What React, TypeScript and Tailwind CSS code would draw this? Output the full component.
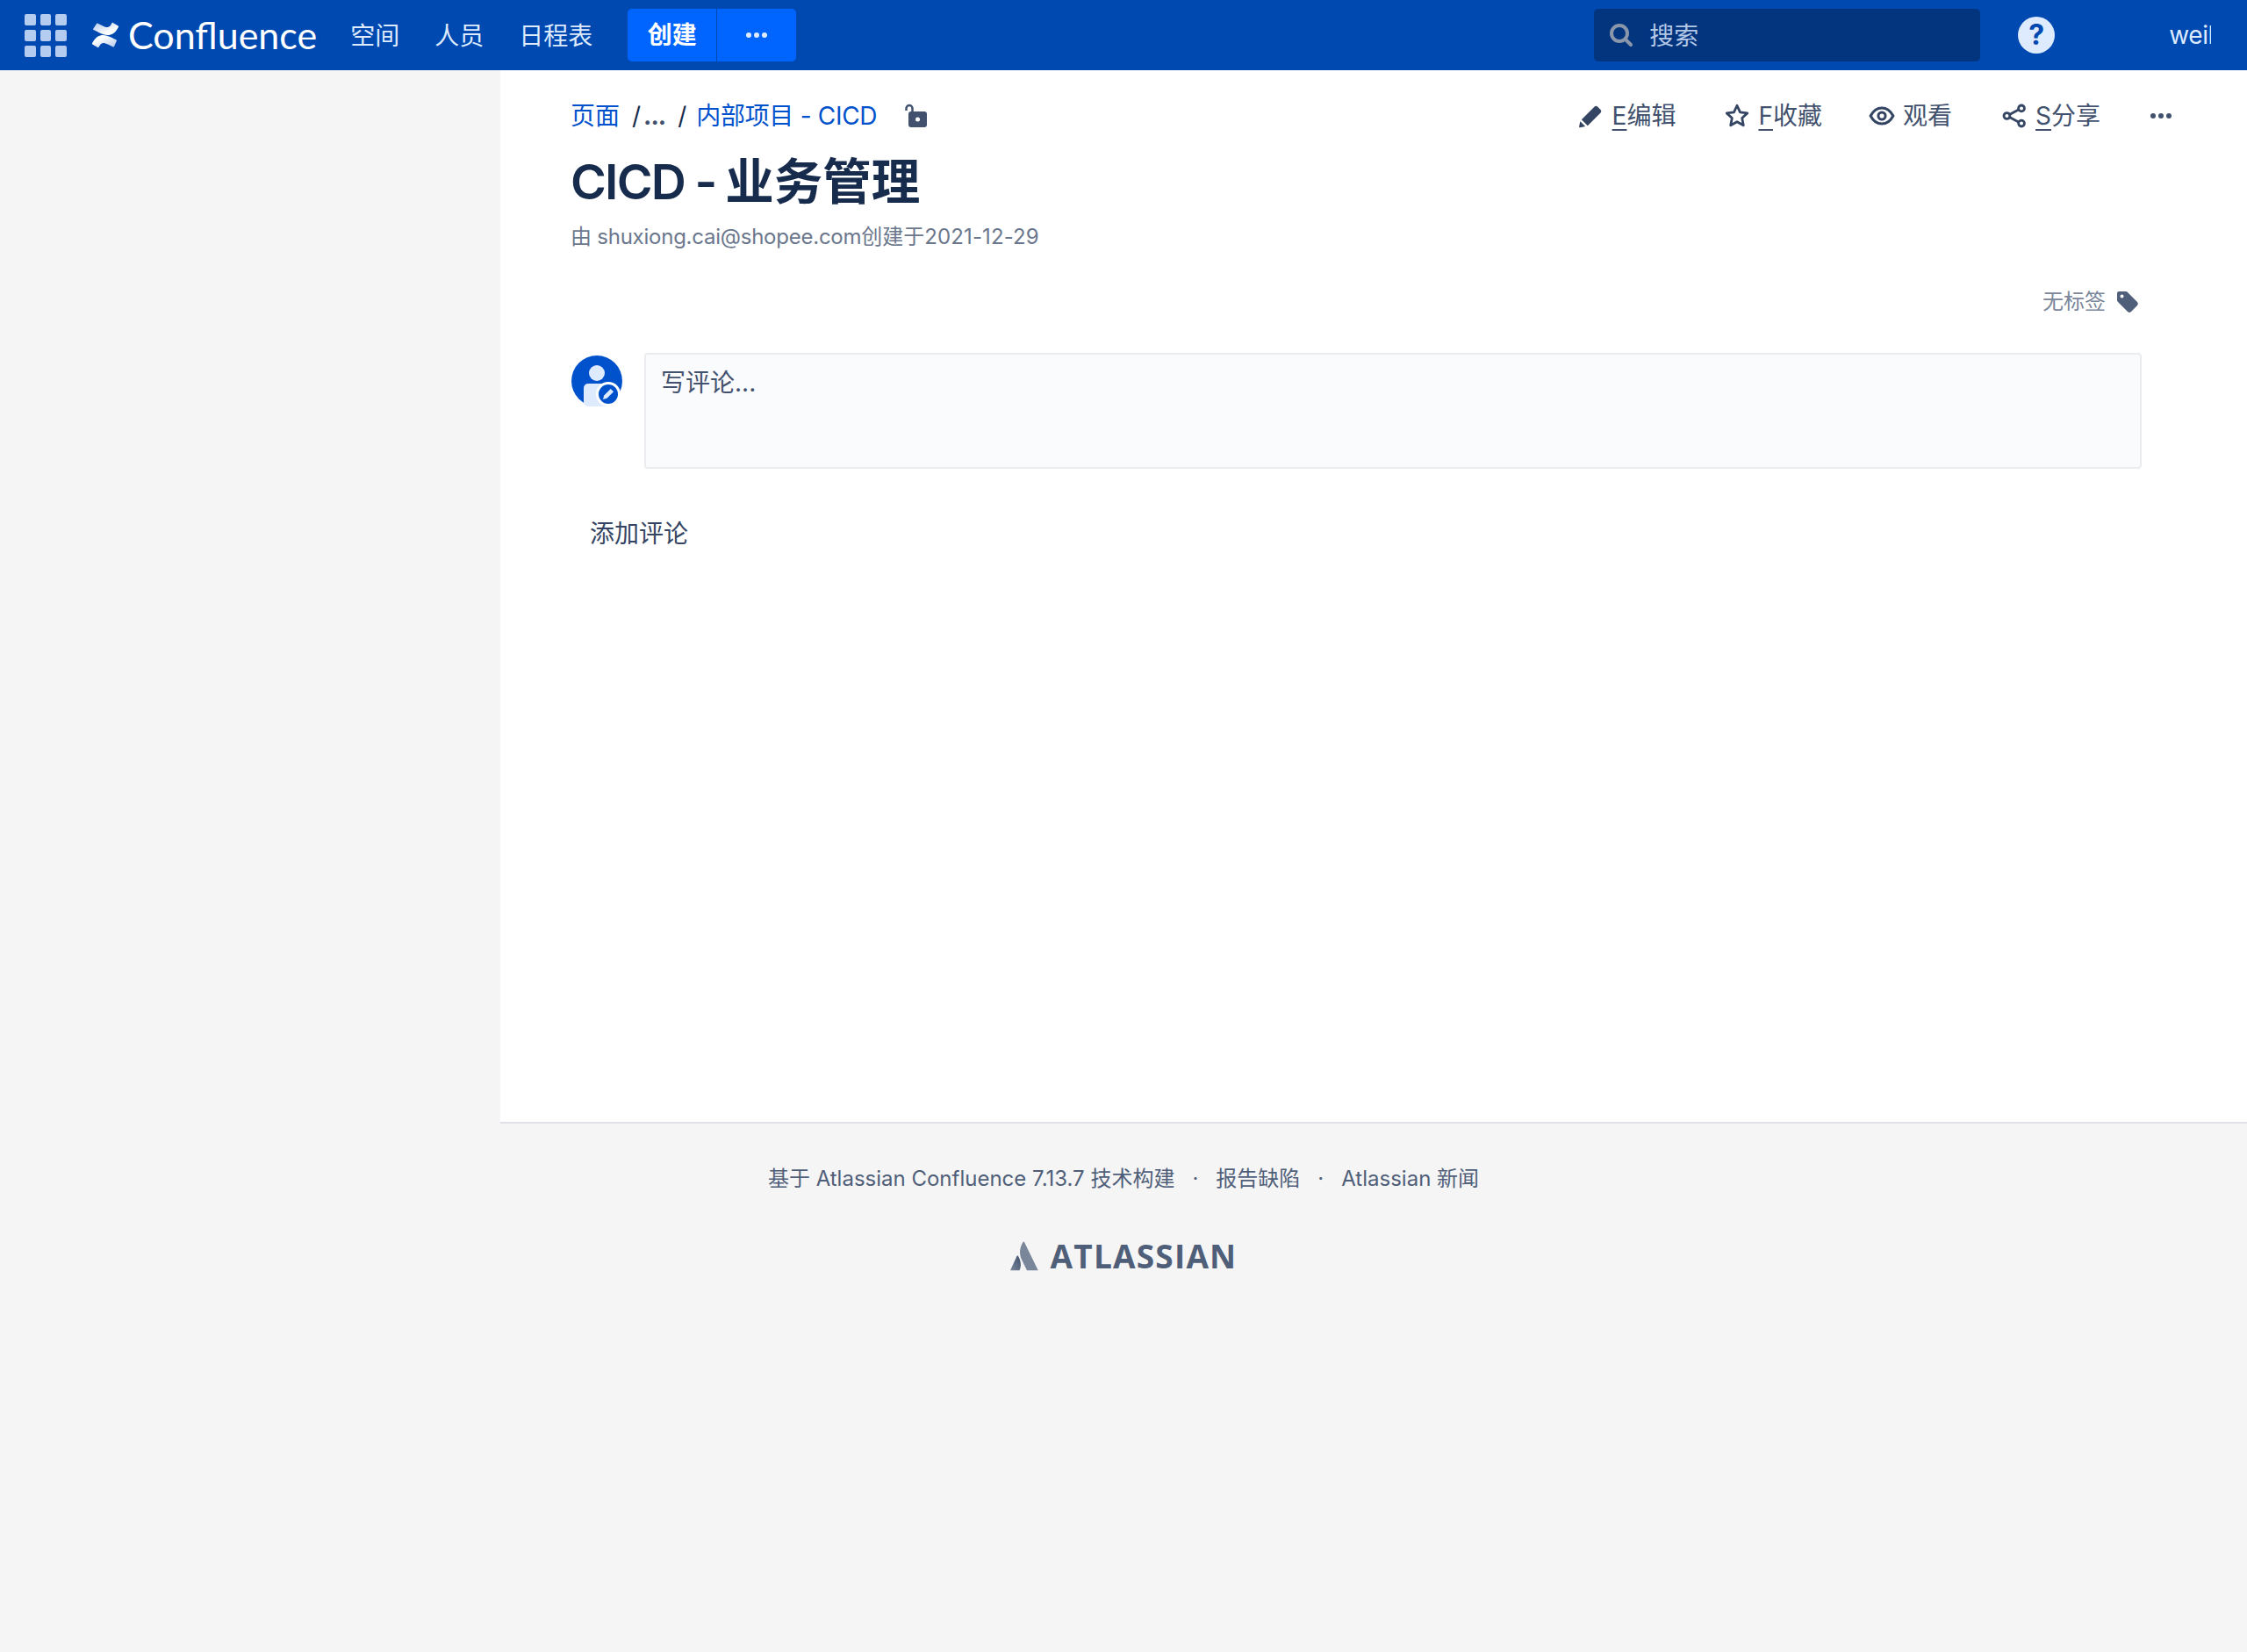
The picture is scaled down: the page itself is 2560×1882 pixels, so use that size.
import React from 'react';

const navItems = ['空间', '人员', '日程表'];

const ConfluenceLogo = () => (
  <svg viewBox="0 0 32 32" className="w-[32px] h-[32px] shrink-0">
    <defs>
      <linearGradient id="cfA" x1="1" y1="1" x2="0.3" y2="0.3">
        <stop offset="0" stopColor="#b3c8ea" />
        <stop offset="1" stopColor="#ffffff" />
      </linearGradient>
      <linearGradient id="cfB" x1="0" y1="0" x2="0.7" y2="0.7">
        <stop offset="0" stopColor="#b3c8ea" />
        <stop offset="1" stopColor="#ffffff" />
      </linearGradient>
    </defs>
    <path d="M2 23.600c-.4.6-.7 1.200-1 1.600-.2.4-.1.9.3 1.200l6 3.600c.4.3.9.1 1.200-.3.2-.4.6-1 1-1.700 2.400-4 4.900-3.500 9.400-1.400l6 2.800c.4.2.9 0 1.100-.4l2.900-6.500c.2-.4 0-.9-.4-1.100-1.300-.6-3.800-1.800-6-2.900C14.500 14.400 7.200 14.700 2 23.600z" fill="url(#cfA)" />
    <path d="M30 8.400c.4-.6.7-1.200 1-1.600.2-.4.1-.9-.3-1.200l-6-3.600c-.4-.3-.9-.1-1.200.3-.2.4-.6 1-1 1.700-2.400 4-4.900 3.500-9.400 1.400l-6-2.800c-.4-.2-.9 0-1.100.4L2.100 8.900c-.2.4 0 .9.4 1.100 1.300.6 3.800 1.800 6 2.900 9 4.700 16.300 4.400 21.500-4.500z" fill="url(#cfB)" />
  </svg>
);

const AppSwitcher = () => (
  <div className="grid grid-cols-3 gap-x-[5px] gap-y-[5px] w-[48px] shrink-0">
    {Array.from({ length: 9 }).map((_, i) => (
      <span key={i} className="h-[13px] rounded-[2px] bg-[#b3ccf0]" />
    ))}
  </div>
);

const Header = () => (
  <header className="h-[80px] bg-[#0049b0] flex items-center pl-[28px] text-[#deebff]">
    <AppSwitcher />
    <div className="ml-[28px]">
      <ConfluenceLogo />
    </div>
    <span className="ml-[10px] pb-[2px] text-[43px] leading-none font-['Lato',sans-serif] font-normal text-white">
      Confluence
    </span>
    <nav className="ml-[38px] flex gap-[40px] text-[28px] leading-none pt-[2px]">
      {navItems.map((item) => (
        <span key={item}>{item}</span>
      ))}
    </nav>
    <div className="ml-[40px] flex h-[60px] rounded-[5px] overflow-hidden text-white">
      <span className="w-[101px] bg-[#0065ff] flex items-center justify-center text-[28px] font-bold">创建</span>
      <span className="w-[1px] bg-[#0049b0]" />
      <span className="w-[90px] bg-[#0065ff] flex items-center justify-center gap-[3px]">
        <i className="w-[6px] h-[6px] rounded-full bg-[#deebff]" />
        <i className="w-[6px] h-[6px] rounded-full bg-[#deebff]" />
        <i className="w-[6px] h-[6px] rounded-full bg-[#deebff]" />
      </span>
    </div>
    <div className="ml-[909px] w-[440px] h-[60px] rounded-[5px] bg-[#03357f] flex items-center pl-[16px]">
      <svg viewBox="0 0 30 30" className="w-[30px] h-[30px] shrink-0">
        <circle cx="13" cy="13" r="9" fill="none" stroke="#8a97ab" strokeWidth="4" />
        <path d="M19.500 19.500l6.500 6.500" stroke="#8a97ab" strokeWidth="4" strokeLinecap="round" />
      </svg>
      <span className="ml-[17px] pt-[2px] text-[28px] leading-none text-[#b3c7e6]">搜索</span>
    </div>
    <span className="ml-[43px] w-[42px] h-[42px] rounded-full bg-[#deebff] flex items-center justify-center text-[32px] font-bold text-[#0049b0] leading-none">
      ?
    </span>
    <span className="ml-[130px] w-[48px] overflow-hidden whitespace-nowrap text-[28px] leading-none tracking-[-0.4px]">weil</span>
  </header>
);

const Action = ({ icon, hot, label, className }: { icon: React.ReactNode; hot?: string; label: string; className?: string }) => (
  <span className={`flex items-center text-[#42526e] text-[28px] leading-none ${className ?? ''}`}>
    {icon}
    <span className="ml-[9px]">
      {hot && <span className="underline underline-offset-[5px] decoration-[2px]">{hot}</span>}
      {label}
    </span>
  </span>
);

const PageActions = () => (
  <div className="flex items-center">
    <Action
      hot="E"
      label="编辑"
      icon={
        <svg viewBox="0 0 28 28" className="w-[30px] h-[30px] mr-[1px]" fill="#344563">
          <path d="M2 25.200a1 1 0 0 0 1.200 1.200l5.300-1.200-5.400-5.400L2 25.200zM24.800 7.500l-3.300-3.300a2.300 2.300 0 0 0-3.200 0L4.500 18l6.500 6.500L24.800 10.700a2.300 2.300 0 0 0 0-3.200z" />
        </svg>
      }
    />
    <Action
      className="ml-[55px]"
      hot="F"
      label="收藏"
      icon={
        <svg viewBox="0 0 28 28" className="w-[30px] h-[30px]" fill="none" stroke="#344563" strokeWidth="2.600" strokeLinejoin="round">
          <path d="M14 3l3.300 7.200 7.700.9-5.700 5.300 1.500 7.700L14 20.300l-6.800 3.800 1.500-7.700L3 11.100l7.700-.9L14 3z" />
        </svg>
      }
    />
    <Action
      className="ml-[53px]"
      label="观看"
      icon={
        <svg viewBox="0 0 28 28" className="w-[30px] h-[30px]" fill="none" stroke="#344563">
          <path d="M2 14c3-5.800 7-8.500 12-8.500s9 2.700 12 8.500c-3 5.800-7 8.500-12 8.500S5 19.800 2 14z" strokeWidth="2.800" />
          <circle cx="14" cy="14" r="3.800" strokeWidth="2.800" />
        </svg>
      }
    />
    <Action
      className="ml-[56px]"
      hot="S"
      label="分享"
      icon={
        <svg viewBox="0 0 28 28" className="w-[30px] h-[30px]" fill="none" stroke="#344563" strokeWidth="2.600">
          <circle cx="21.500" cy="6" r="3.200" />
          <circle cx="6" cy="14" r="3.200" />
          <circle cx="21.500" cy="22" r="3.200" />
          <path d="M8.800 12.500l10-5.200M8.800 15.500l10 5.200" />
        </svg>
      }
    />
    <span className="ml-[57px] flex gap-[3px]">
      <i className="w-[6px] h-[6px] rounded-full bg-[#42526e]" />
      <i className="w-[6px] h-[6px] rounded-full bg-[#42526e]" />
      <i className="w-[6px] h-[6px] rounded-full bg-[#42526e]" />
    </span>
  </div>
);

const Breadcrumbs = () => (
  <div className="flex items-center text-[28px] leading-none text-[#172b4d]">
    <span className="text-[#0052cc]">页面</span>
    <span className="ml-[14px]">/</span>
    <span className="ml-[3px] text-[#42526e] font-bold tracking-[-1px]">...</span>
    <span className="ml-[14px]">/</span>
    <span className="ml-[11px] text-[#0052cc] tracking-[-0.3px]">内部项目 - CICD</span>
    <svg viewBox="0 0 26 28" className="ml-[32px] w-[26px] h-[28px]">
      <path d="M1.500 8V5.500a3.500 3.500 0 0 1 7 0V11" fill="none" stroke="#42526e" strokeWidth="2.500" />
      <rect x="4" y="9" width="21" height="18" rx="3" fill="#42526e" />
      <circle cx="14.500" cy="18" r="2.500" fill="#fff" />
    </svg>
  </div>
);

const Avatar = () => (
  <svg viewBox="0 0 58 58" className="w-[58px] h-[58px] shrink-0">
    <circle cx="29" cy="29" r="29" fill="#0052cc" />
    <circle cx="29" cy="20" r="9" fill="#deebff" />
    <path d="M14 37a5 5 0 0 1 5-5h20a5 5 0 0 1 5 5v21H19a5 5 0 0 1-5-5V37z" fill="#deebff" />
    <path d="M14 48h30v9a29 29 0 0 1-21 0z" fill="#deebff" />
    <circle cx="42" cy="44" r="14" fill="#fff" />
    <circle cx="42" cy="44" r="11" fill="#0052cc" />
    <path d="M36 50l1.200-4.500 7.500-7.500 3.300 3.300-7.500 7.500z" fill="#deebff" />
  </svg>
);

const AtlassianLogo = () => (
  <div className="flex items-center">
    <svg viewBox="0 0 32 34" className="w-[32px] h-[34px]">
      <defs>
        <linearGradient id="atA" x1="1" y1="0" x2="0" y2="1">
          <stop offset="0" stopColor="#42526e" />
          <stop offset="1" stopColor="#7a869a" />
        </linearGradient>
      </defs>
      <path d="M9 17c-.5-.6-1.200-.5-1.600.2L0 33.300h10.500c2.500-5 1.500-11.500-1.500-16.300z" fill="url(#atA)" />
      <path d="M14.500 1C10.500 7.500 10 14.500 13 21l6 12.300h12.700L16 1c-.4-.8-1.100-.8-1.500 0z" fill="#7a869a" />
    </svg>
    <span className="ml-[14px] text-[37px] leading-none font-['Open_Sans',sans-serif] font-bold text-[#505f79] tracking-[1.200px]">
      ATLASSIAN
    </span>
  </div>
);

const Footer = () => (
  <footer className="flex-1 bg-[#f5f5f5]">
    <div className="ml-[570px] border-t-2 border-[#dfe1e6]" />
    <div className="pt-[50px] flex flex-col items-center text-[#505f79]">
      <div className="flex text-[24px] leading-[26px]">
        <span>基于 Atlassian Confluence 7.13.7 技术构建</span>
        <span className="mx-[20px]">·</span>
        <span>报告缺陷</span>
        <span className="mx-[20px]">·</span>
        <span>Atlassian 新闻</span>
      </div>
      <div className="mt-[56px]">
        <AtlassianLogo />
      </div>
    </div>
  </footer>
);

export default function App() {
  return (
    <div className="min-h-[1882px] flex flex-col bg-[#f5f5f5] font-['Inter','Noto_Sans_CJK_SC',sans-serif]">
      <Header />
      <div className="flex h-[1198px]">
        <aside className="w-[570px] shrink-0" />
        <main className="flex-1 bg-white pl-[80px] pr-[120px] pt-[34px]">
          <div className="flex items-center justify-between h-[36px]">
            <Breadcrumbs />
            <div className="-mr-[120px] pr-[86px]">
              <PageActions />
            </div>
          </div>
          <h1 className="mt-[22px] text-[55.500px] leading-[70px] font-semibold text-[#172b4d]">
            <span className="tracking-[-1.800px]">CICD</span>
            <span className="tracking-[-2.500px]"> - </span>业务管理
          </h1>
          <p className="mt-[13px] text-[24px] leading-[30px] text-[#6b778c]">
            <span className="tracking-[-0.240px]">由 shuxiong.cai@shopee.com</span>创建于
            <span className="tracking-[0.100px]">2021-12-29</span>
          </p>
          <div className="mt-[46px] pr-[3px] flex items-center justify-end gap-[12px] text-[24px] leading-none text-[#7a869a]">
            <span>无标签</span>
            <svg viewBox="0 0 26 26" className="w-[26px] h-[26px]">
              <path d="M3 1h8a3 3 0 0 1 2 1l11 11a3 3 0 0 1 0 4l-7 7a3 3 0 0 1-4 0L2 13a3 3 0 0 1-1-2V3a2 2 0 0 1 2-2z" fill="#505f79" />
              <circle cx="6.500" cy="6.500" r="2" fill="#fff" />
            </svg>
          </div>
          <div className="mt-[45px] flex items-start">
            <div className="mt-[3px] ml-[1px]">
              <Avatar />
            </div>
            <div className="ml-[25px] flex-1 h-[132px] rounded-[4px] border-2 border-[#ebecf0] bg-[#fafbfc] pl-[17px] pt-[15px] text-[28px] leading-[34px] text-[#42526e]">
              写评论...
            </div>
          </div>
          <div className="mt-[57px] pl-[22px] text-[28px] leading-[34px] text-[#344563]">添加评论</div>
        </main>
      </div>
      <Footer />
    </div>
  );
}
